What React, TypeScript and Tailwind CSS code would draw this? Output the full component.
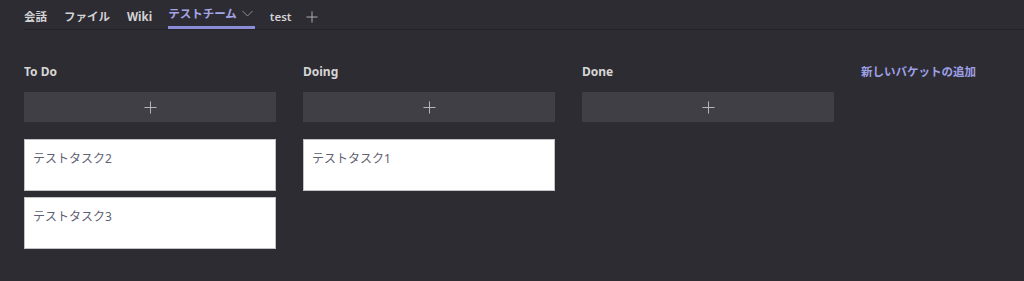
import React from "react";

const font = { fontFamily: '"Noto Sans", "Noto Sans CJK JP", sans-serif' };

function Plus({ size = 14, className = "" }: { size?: number; className?: string }) {
  return (
    <svg width={size} height={size} viewBox="0 0 14 14" className={className}>
      <path d="M7 0.5V13.5M0.5 7H13.5" stroke="currentColor" strokeWidth="1" fill="none" />
    </svg>
  );
}

function Column({ title, cards }: { title: string; cards: string[] }) {
  return (
    <div className="w-[252px] flex flex-col">
      <div className="h-[16px] leading-[16px] text-[12px] font-bold text-[#d6d6d6]">{title}</div>
      <button className="mt-[12px] h-[30px] w-full bg-[#403f46] flex items-center justify-center text-[#bdbdc2]">
        <Plus size={13} />
      </button>
      <div className="mt-[17px] flex flex-col gap-[6px]">
        {cards.map((c) => (
          <div key={c} className="h-[52px] bg-white border border-[#c3c3c6] pl-[8px] pt-[11px] text-[12px] leading-[16px] text-[#616172]">
            {c}
          </div>
        ))}
      </div>
    </div>
  );
}

export default function App() {
  return (
    <div className="w-[1024px] h-[281px] bg-[#2d2c32] overflow-hidden" style={font}>
      <div className="ml-[24px] h-[30px] border-b border-[#232227] flex items-stretch text-[11.5px] font-bold text-[#d3d3d6]">
        <div className="flex items-center pt-[4px]">会話</div>
        <div className="flex items-center pt-[4px] ml-[17px]">ファイル</div>
        <div className="flex items-center pt-[4px] ml-[17px]">Wiki</div>
        <div className="flex items-center ml-[16px] border-b-[3px] border-[#8b8cd8] text-[#a4a5e6] pt-[1px]">
          <span>テストチーム</span>
          <svg width="11" height="7" viewBox="0 0 11 7" className="ml-[5px] mr-[2px] text-[#8d8c94]">
            <path d="M0.5 1L5.5 6L10.5 1" stroke="currentColor" strokeWidth="1" fill="none" />
          </svg>
        </div>
        <div className="flex items-center pt-[4px] ml-[15px] font-semibold">test</div>
        <div className="flex items-center pt-[4px] ml-[14px] text-[#bdbdc2]">
          <Plus size={12} />
        </div>
      </div>
      <div className="pl-[24px] pt-[34px] flex gap-[27px]">
        <Column title="To Do" cards={["テストタスク2", "テストタスク3"]} />
        <Column title="Doing" cards={["テストタスク1"]} />
        <Column title="Done" cards={[]} />
        <div className="h-[16px] leading-[16px] text-[11.5px] font-bold text-[#9ea0e6]">新しいバケットの追加</div>
      </div>
    </div>
  );
}
